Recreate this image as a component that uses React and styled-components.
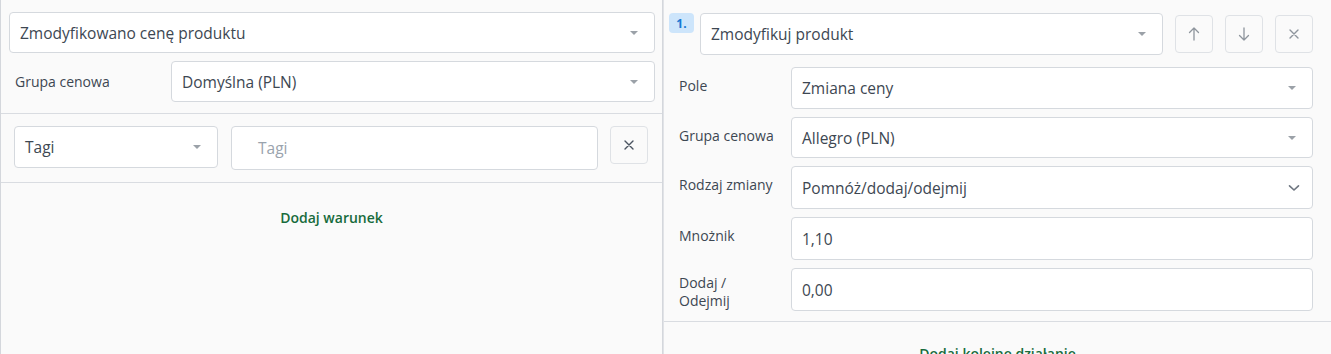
import React from 'react';
import styled, { createGlobalStyle } from 'styled-components';

const Global = createGlobalStyle`
  html, body {
    margin: 0;
    padding: 0;
    background: #fafafa;
    font-family: "Open Sans", "Noto Sans", sans-serif;
    color: #3d4752;
  }
`;

const Page = styled.div`
  display: flex;
  width: 1331px;
  height: 354px;
  overflow: hidden;
  background: #fafafa;
`;

const LeftPanel = styled.div`
  width: 663px;
  flex: none;
  border-left: 1px solid #d4d7dc;
  border-right: 1px solid #d4d7dc;
  box-sizing: border-box;
`;

const RightPanel = styled.div`
  flex: 1;
  border-left: 1px solid #e1e3e7;
  box-sizing: border-box;
  min-width: 0;
`;

const Section = styled.div`
  padding: ${p => p.$pad};
  border-bottom: ${p => (p.$line ? '1px solid #d9dce1' : 'none')};
  display: grid;
  row-gap: ${p => p.$gap || 0}px;
`;

const Row = styled.div`
  display: flex;
  align-items: ${p => p.$align || 'center'};
  gap: ${p => p.$gap || 0}px;
`;

const Label = styled.div`
  width: ${p => p.$w}px;
  flex: none;
  font-size: 14px;
  line-height: 18px;
  color: #3d4752;
  padding-top: ${p => p.$top || 0}px;
  padding-left: ${p => p.$left || 0}px;
  box-sizing: border-box;
`;

const Field = styled.div`
  flex: ${p => (p.$w ? 'none' : '1 1 auto')};
  width: ${p => (p.$w ? `${p.$w}px` : 'auto')};
  height: ${p => p.$h || 42}px;
  box-sizing: border-box;
  background: #fff;
  border: 1px solid #d5d9de;
  border-radius: 4px;
  display: flex;
  align-items: center;
  padding: 0 12px 0 ${p => p.$pl || 10}px;
  margin: ${p => p.$m || 0};
  font-size: 15.5px;
  color: ${p => (p.$placeholder ? '#9aa3ad' : '#3d4752')};
  min-width: 0;
`;

const FieldText = styled.span`
  flex: 1;
  white-space: nowrap;
`;

const Caret = styled.span`
  width: 0;
  height: 0;
  border-left: 4px solid transparent;
  border-right: 4px solid transparent;
  border-top: 4px solid #9ba1a8;
  margin-right: 4px;
`;

const IconButton = styled.button`
  width: ${p => p.$size || 38}px;
  height: ${p => p.$size || 38}px;
  flex: none;
  padding: 0;
  background: #fafafa;
  border: 1px solid #dfe2e6;
  border-radius: 4px;
  display: flex;
  align-items: center;
  justify-content: center;
`;

const AddLink = styled.div`
  text-align: center;
  font-size: 14px;
  font-weight: 600;
  color: #176b3c;
  padding-top: ${p => p.$top}px;
`;

const Badge = styled.div`
  width: 25px;
  height: 20px;
  flex: none;
  border-radius: 4px;
  background: #cde5fb;
  color: #1877d2;
  font-size: 12px;
  font-weight: 700;
  display: flex;
  align-items: center;
  justify-content: center;
  align-self: flex-start;
`;

const Header = styled.div`
  display: flex;
  align-items: center;
  padding: 13px 18px 0 5px;
`;

const HeaderSelect = styled.div`
  display: flex;
  flex: 1;
  margin: 0 12px 0 6px;
`;

const Buttons = styled.div`
  display: flex;
  gap: 12px;
`;

const Form = styled.div`
  display: flex;
  flex-direction: column;
  gap: 8px;
  padding: 12px 18px 10px 15px;
  border-bottom: 1px solid #d9dce1;
`;

const Cross = ({ color = '#6b7480' }) => (
  <svg width="12" height="12" viewBox="0 0 12 12">
    <path d="M2 2L10 10M10 2L2 10" stroke={color} strokeWidth="1.4" strokeLinecap="round" />
  </svg>
);

const Arrow = ({ down }) => (
  <svg width="14" height="16" viewBox="0 0 14 16" style={{ transform: down ? 'rotate(180deg)' : 'none' }}>
    <path d="M7 14V2M2.5 6.5L7 2L11.5 6.5" stroke="#8e959d" strokeWidth="1.3" fill="none" strokeLinecap="round" strokeLinejoin="round" />
  </svg>
);

const Chevron = () => (
  <svg width="12" height="8" viewBox="0 0 12 8">
    <path d="M1.5 1.8L6 6L10.5 1.8" stroke="#6e7680" strokeWidth="1.6" fill="none" strokeLinecap="round" />
  </svg>
);

const Select = ({ value, w, h, chevron }) => (
  <Field $w={w} $h={h}>
    <FieldText>{value}</FieldText>
    {chevron ? <Chevron /> : <Caret />}
  </Field>
);

const FormRow = ({ label, top = 10, children }) => (
  <Row $align="flex-start">
    <Label $w={112} $top={top}>{label}</Label>
    {children}
  </Row>
);

export default function App() {
  return (
    <Page>
      <Global />
      <LeftPanel>
        <Section $pad="12px 7px 11px 8px" $gap={8} $line>
          <Select value="Zmodyfikowano cenę produktu" h={41} />
          <Row>
            <Label $w={162} $left={6}>Grupa cenowa</Label>
            <Select value="Domyślna (PLN)" h={41} />
          </Row>
        </Section>
        <Section $pad="12px 14px 12px 13px" $line>
          <Row $align="flex-start">
            <Select value="Tagi" w={204} />
            <Field $h={44} $pl={26} $m="0 12px 0 13px" $placeholder>Tagi</Field>
            <IconButton $size={38}><Cross color="#4a5360" /></IconButton>
          </Row>
        </Section>
        <AddLink $top={25}>Dodaj warunek</AddLink>
      </LeftPanel>
      <RightPanel>
        <Header>
          <Badge>1.</Badge>
          <HeaderSelect>
            <Select value="Zmodyfikuj produkt" />
          </HeaderSelect>
          <Buttons>
            <IconButton><Arrow /></IconButton>
            <IconButton><Arrow down /></IconButton>
            <IconButton><Cross color="#8e959d" /></IconButton>
          </Buttons>
        </Header>
        <Form>
          <FormRow label="Pole"><Select value="Zmiana ceny" /></FormRow>
          <FormRow label="Grupa cenowa"><Select value="Allegro (PLN)" h={41} /></FormRow>
          <FormRow label="Rodzaj zmiany"><Select value="Pomnóż/dodaj/odejmij" h={43} chevron /></FormRow>
          <FormRow label="Mnożnik"><Field $h={43}>1,10</Field></FormRow>
          <FormRow label={<>Dodaj /<br />Odejmij</>} top={6}><Field $h={43}>0,00</Field></FormRow>
        </Form>
        <AddLink $top={22}>Dodaj kolejne działanie</AddLink>
      </RightPanel>
    </Page>
  );
}
